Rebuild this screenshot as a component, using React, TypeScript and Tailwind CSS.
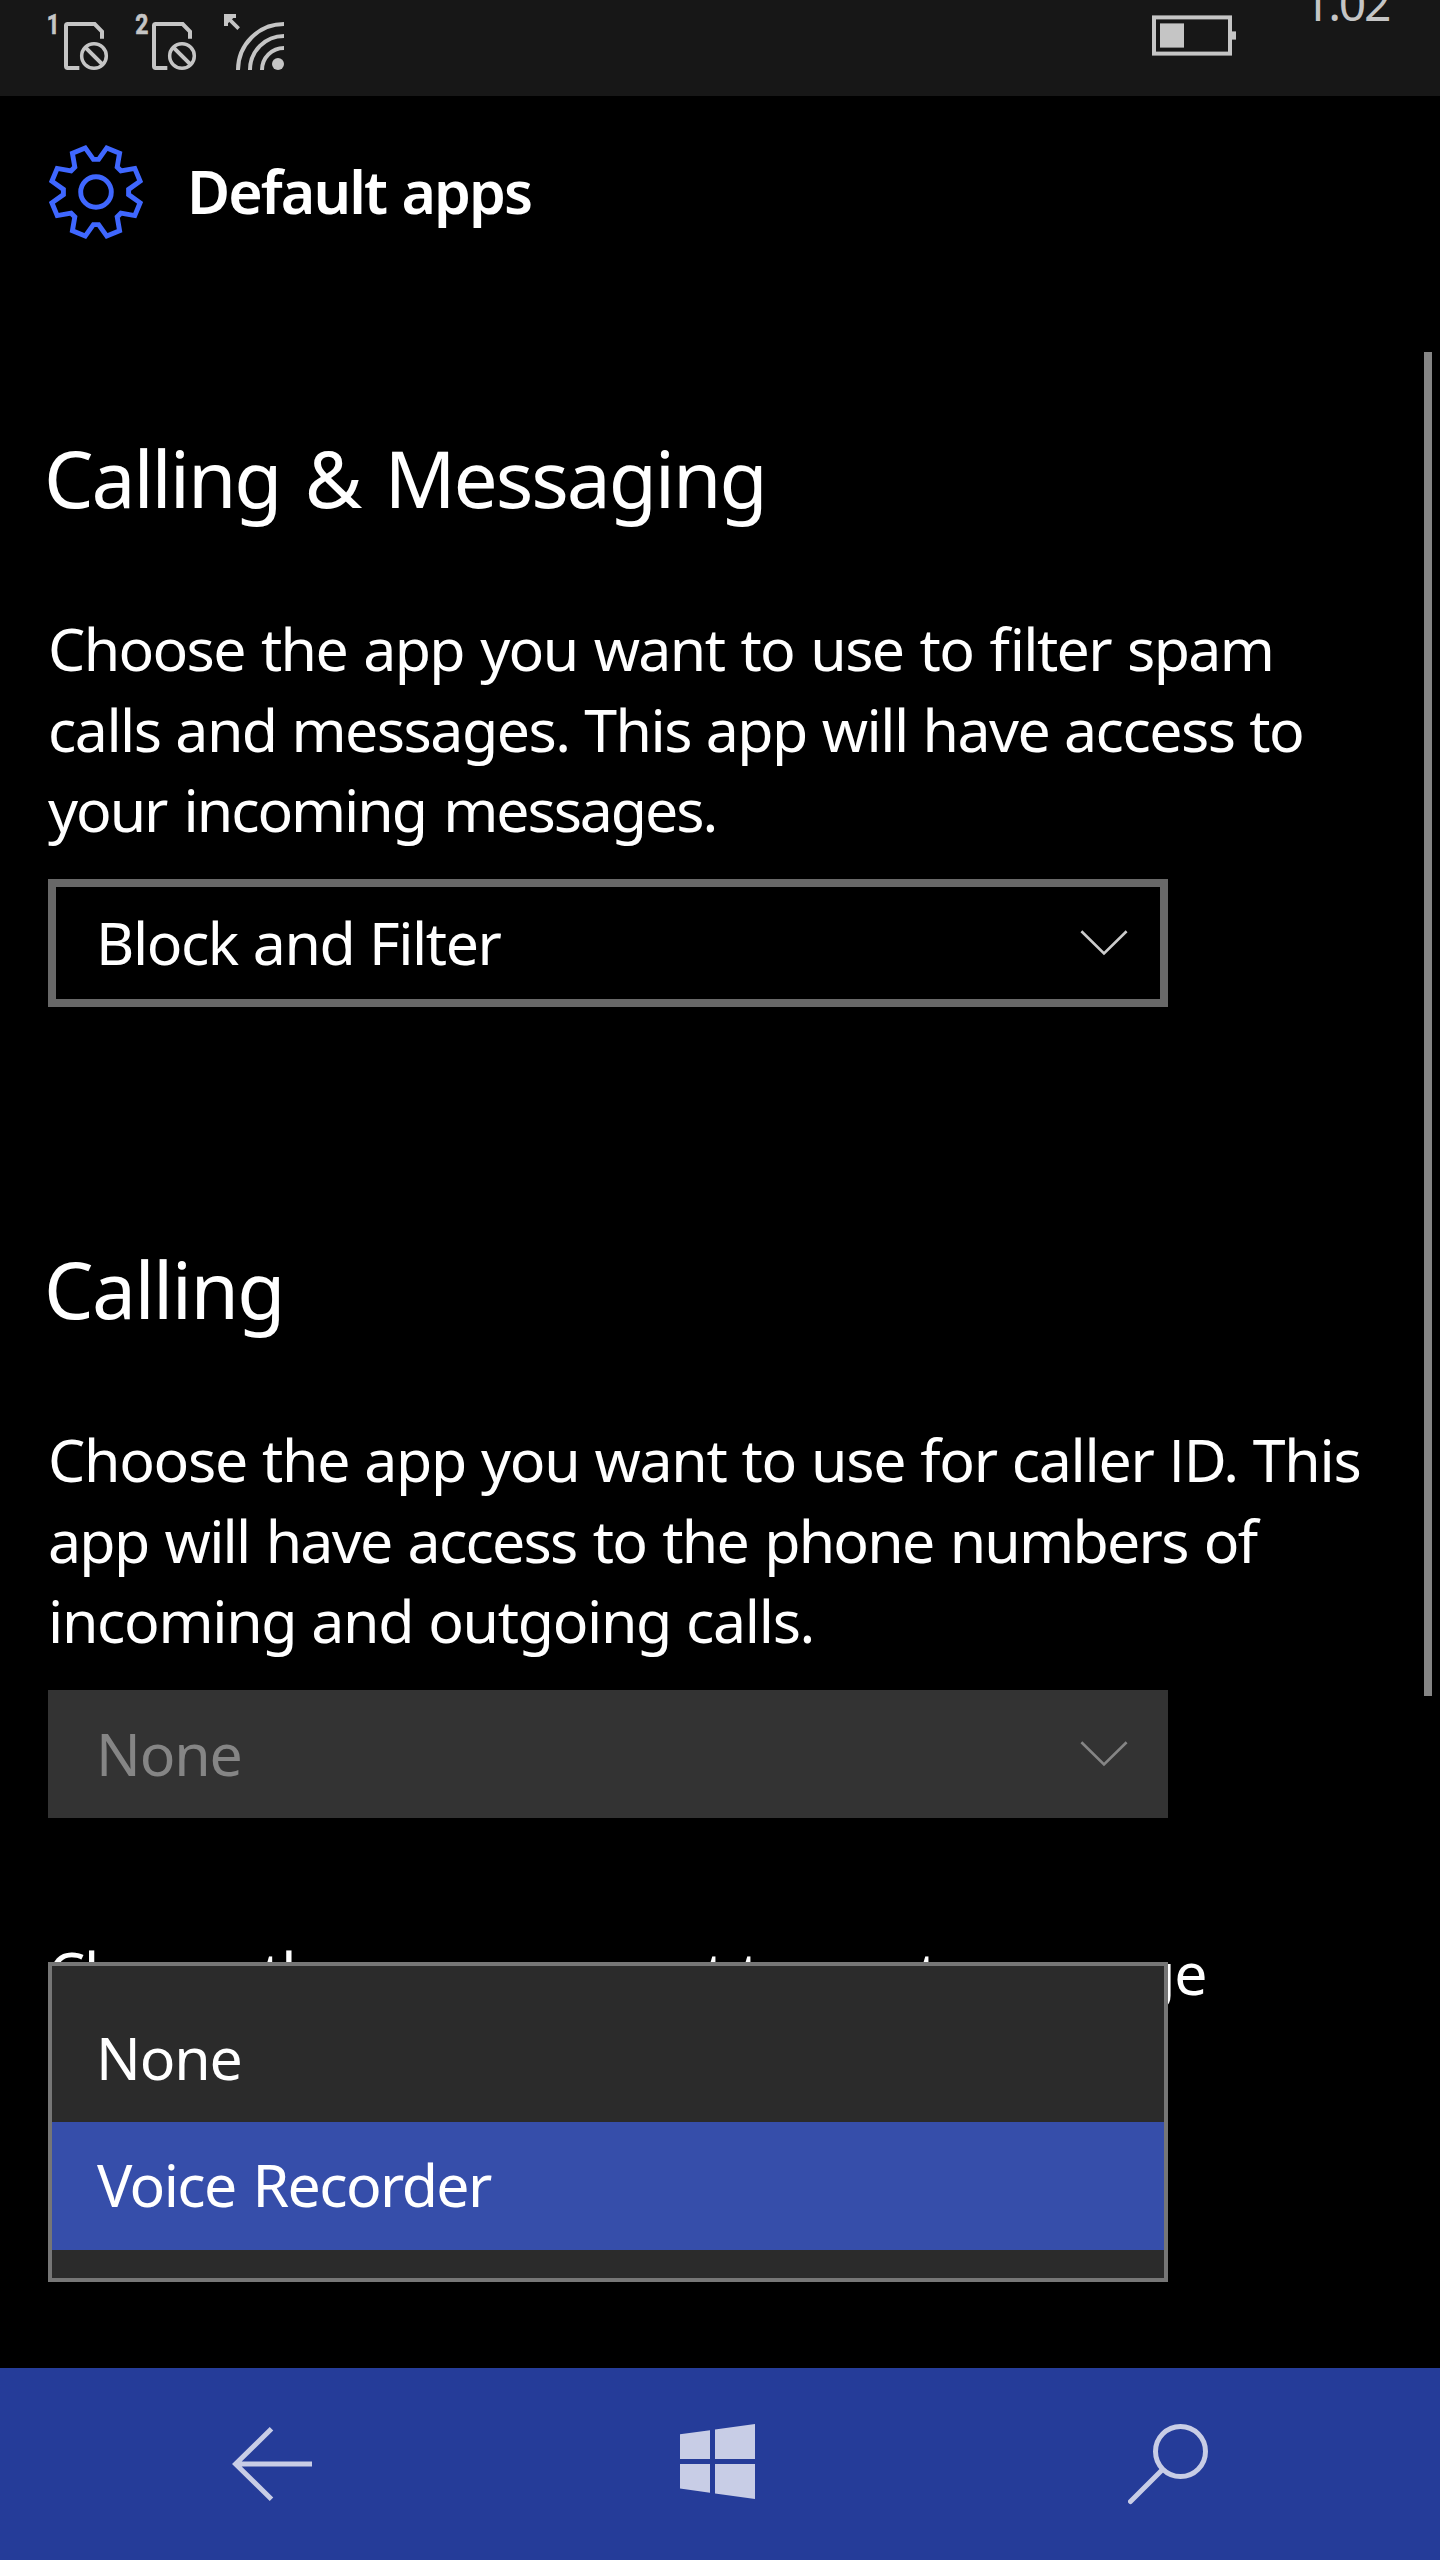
import React from "react";

const polar = (radius: number, degrees: number) => {
  const a = (degrees * Math.PI) / 180;
  return `${(48 + radius * Math.sin(a)).toFixed(2)} ${(48 - radius * Math.cos(a)).toFixed(2)}`;
};

const gearOutline =
  "M" +
  Array.from({ length: 8 }, (_, i) => i * 45)
    .flatMap((d) => [polar(32.7, d - 4.6), polar(32.7, d + 4.6), polar(45.4, d + 13.7), polar(45.4, d + 31.3)])
    .join("L") +
  "Z";

function GearIcon() {
  return (
    <svg className="size-24 shrink-0" viewBox="0 0 96 96" fill="none" stroke="#3f67ff" strokeWidth="4.9">
      <path d={gearOutline} />
      <circle cx="48" cy="48" r="15.3" />
    </svg>
  );
}

function SimIcon({ slot }: { slot: string }) {
  return (
    <svg className="h-24 w-16" viewBox="138 0 192 288" fill="none" stroke="#c5c5c5" strokeWidth="12">
      <text
        transform={slot === "1" ? "translate(140 102) scale(.8 1)" : "translate(142 102) scale(.82 1)"}
        fill="#c5c5c5"
        stroke="#c5c5c5"
        strokeWidth="2"
        className="font-['Roboto',sans-serif] text-[84px] font-bold"
      >
        {slot}
      </text>
      <path d="M238 204H203Q198 204 198 199V77Q198 72 203 72H284L306 95V116" />
      <circle cx="282" cy="168" r="37" strokeWidth="10.5" />
      <path d="M256 142L308 194" />
    </svg>
  );
}

function SignalIcon() {
  return (
    <svg className="h-24 w-16" viewBox="666 0 192 288" fill="none" stroke="#c5c5c5" strokeWidth="12">
      <path d="M708 48H678V78" />
      <path d="M676 46L716 86" strokeWidth="11" />
      <path d="M684 54H700L684 70Z" fill="#c5c5c5" stroke="none" />
      <path d="M714 210A138 138 0 0 1 852 72M750 210A102 102 0 0 1 852 108M786 210A66 66 0 0 1 852 144" />
      <circle cx="834" cy="192" r="18" fill="#c5c5c5" stroke="none" />
    </svg>
  );
}

function BatteryIcon() {
  return (
    <svg className="h-24 w-[84px]" viewBox="0 0 84 96" fill="#c5c5c5">
      <rect x="2" y="17.4" width="76" height="36.2" fill="none" stroke="#c5c5c5" strokeWidth="4" />
      <rect x="8" y="23.4" width="24" height="24.2" />
      <rect x="80" y="31.4" width="4" height="8.2" />
    </svg>
  );
}

function Chevron() {
  return (
    <svg className="h-[26px] w-12" viewBox="0 0 48 26" fill="none" stroke="currentColor" strokeWidth="2.6">
      <path d="M1.4 1.2L24 23.4L46.6 1.2" />
    </svg>
  );
}

function StatusBar() {
  return (
    <div className="flex h-24 items-start overflow-hidden bg-[#171717] pl-[46px] text-[#c5c5c5]">
      <div className="flex gap-6">
        <SimIcon slot="1" />
        <SimIcon slot="2" />
        <SignalIcon />
      </div>
      <div className="ml-auto flex w-[288px] items-start">
        <BatteryIcon />
        <span className="-mt-[21px] ml-[67px] text-[48px] leading-[48px] tracking-[-2.3px]">1.02</span>
      </div>
    </div>
  );
}

function Select({ disabled = false, className = "", children }: { disabled?: boolean; className?: string; children: React.ReactNode }) {
  return (
    <div
      className={`ml-12 flex h-32 w-[1120px] items-center justify-between border-8 pr-8 pl-10 ${
        disabled ? "border-[#333333] bg-[#333333] text-[#858585]" : "border-[#686868] bg-black text-white"
      } ${className}`}
    >
      <span className="pb-px">{children}</span>
      <span className={disabled ? "text-[#858585]" : "text-[#cccccc]"}>
        <Chevron />
      </span>
    </div>
  );
}

export default function App() {
  return (
    <div className="flex h-[2560px] w-[1440px] flex-col overflow-hidden bg-black font-['Noto_Sans','Open_Sans',sans-serif] text-[59px] text-white">
      <StatusBar />

      <main className="relative flex h-[2272px] flex-col overflow-hidden [font-feature-settings:'liga'] [word-spacing:1px]">
        <header className="mt-12 flex h-24 items-center pl-12">
          <GearIcon />
          <h1 className="ml-[43px] pb-[2px] font-semibold tracking-[-1.92px] [word-spacing:2px]">Default apps</h1>
        </header>

        <section className="mt-[188px]">
          <h2 className="pl-11 text-[78.5px] leading-[100px] tracking-[-2.1px] [word-spacing:6px]">Calling &amp; Messaging</h2>
          <p className="mt-20 pl-12 leading-[80.67px] whitespace-nowrap">
            <span className="block tracking-[-1.65px] [word-spacing:2.5px]">Choose the app you want to use to filter spam</span>
            <span className="block tracking-[-1.52px]">calls and messages. This app will have access to</span>
            <span className="block tracking-[-2.07px] [word-spacing:4px]">your incoming messages.</span>
          </p>
          <Select className="mt-[29px] tracking-[-1.45px]">Block and Filter</Select>
        </section>

        <section className="mt-[232px]">
          <h2 className="pl-11 text-[78.5px] leading-[100px] tracking-[-1.6px]">Calling</h2>
          <p className="mt-20 pl-12 leading-[80.67px] whitespace-nowrap">
            <span className="block h-[80.67px] tracking-[-1.29px]">
              Choose the app you want to use for caller <span className="font-['Open_Sans',sans-serif] leading-none">I</span>D. This
            </span>
            <span className="block tracking-[-1.75px] [word-spacing:2.5px]">app will have access to the phone numbers of</span>
            <span className="block tracking-[-1.32px]">incoming and outgoing calls.</span>
          </p>
          <Select disabled className="mt-[29px] tracking-[-1.2px]">
            None
          </Select>
        </section>

        <p className="mt-[114px] pl-12 leading-[80.67px] tracking-[-1.37px] whitespace-nowrap">
          Choose the app you want to use to manage
        </p>

        {/* Scroll position */}
        <div className="absolute top-64 right-2 h-[1344px] w-2 bg-[#858585]" />

        {/* Open drop-down list */}
        <ul className="absolute top-[1866px] left-12 h-80 w-[1120px] border-4 border-[#767676] bg-[#2b2b2b] pt-7">
          <li className="flex h-32 items-center pb-[2px] pl-11 tracking-[-1.2px]">None</li>
          <li className="flex h-32 items-center bg-[#364eaa] pb-[3px] pl-[45px] tracking-[-1.6px] [word-spacing:3px]">Voice Recorder</li>
        </ul>
      </main>

      <nav className="flex h-48 gap-[368px] bg-[#253c99] pl-[232px]">
        <svg className="h-48 w-20" viewBox="0 0 80 192" fill="none" stroke="#c8cde6" strokeWidth="5">
          <path d="M39.5 60.8L3.6 96L39.5 131.2M4 96H80" />
        </svg>
        <svg className="h-48 w-20" viewBox="0 0 80 192" fill="#c8cde6">
          <path d="M0 66.3L30 62.2V91H0ZM35 61.5L75 56V91H35ZM0 96H30V124.8L0 120.6ZM35 96H75V131L35 125.6Z" />
        </svg>
        <svg className="h-48 w-20" viewBox="0 0 80 192" fill="none" stroke="#c8cde6" strokeWidth="5" strokeLinecap="round">
          <circle cx="52.5" cy="83.5" r="25" />
          <path d="M34.3 101.8L2.5 133.6" />
        </svg>
      </nav>
    </div>
  );
}
